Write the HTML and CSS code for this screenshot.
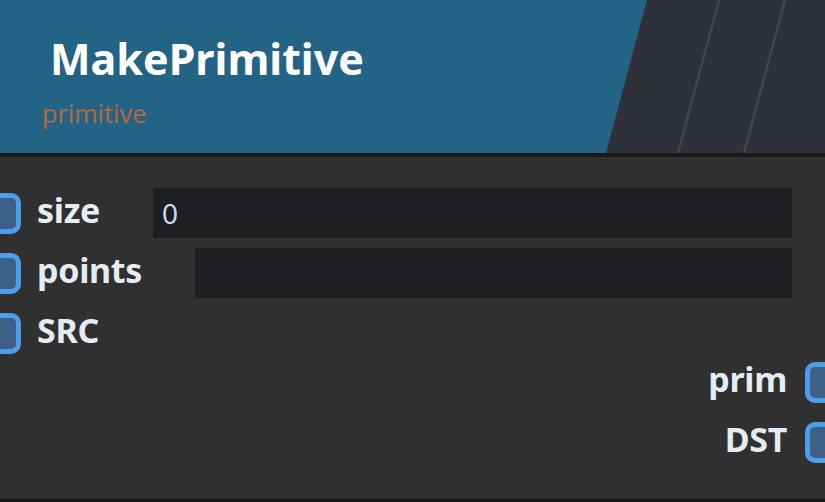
FILE: index.html
```html
<!DOCTYPE html>
<html lang="en">
<head>
  <meta charset="UTF-8" />
  <title>MakePrimitive</title>
  <link rel="stylesheet" href="styles.css">
</head>
<body>

<div class="node">
  <div class="node-head">
    <div class="title">MakePrimitive</div>
    <div class="category">primitive</div>
    <!-- striped corner -->
    <svg class="head-deco" width="825" height="153" viewBox="0 0 825 153">
      <polygon points="647,0 825,0 825,153 606,153" fill="#2f313a"/>
      <line x1="719" y1="0" x2="678" y2="153" stroke="#44454a" stroke-width="2.5"/>
      <line x1="785" y1="0" x2="744" y2="153" stroke="#44454a" stroke-width="2.5"/>
    </svg>
  </div>

  <div class="node-body">
    <div class="inputs">
      <div class="row">
        <span class="socket in"></span>
        <span class="label">size</span>
        <div class="field">0</div>
      </div>
      <div class="row">
        <span class="socket in"></span>
        <span class="label">points</span>
        <div class="field"></div>
      </div>
      <div class="row">
        <span class="socket in"></span>
        <span class="label">SRC</span>
      </div>
    </div>

    <div class="outputs">
      <div class="row out">
        <span class="label">prim</span>
        <span class="socket"></span>
      </div>
      <div class="row out">
        <span class="label">DST</span>
        <span class="socket"></span>
      </div>
    </div>
  </div>
</div>

</body>
</html>
```

FILE: styles.css
```css
body { margin: 0; background: #303030; font-family: "Noto Sans", "Open Sans", sans-serif; overflow: hidden; }
.node { width: 825px; height: 502px; overflow: hidden; display: flex; flex-direction: column; }

.node-head { position: relative; height: 153px; background: #236385; border-bottom: 4px solid #1a1a1a; box-sizing: content-box; }
.head-deco { position: absolute; top: 0; left: 0; }
.title { color: #fff; font-weight: bold; font-size: 43px; line-height: 1; padding: 37px 0 0 50px; position: relative; z-index: 1; }
.category { color: #b06a3c; font-size: 25px; line-height: 1; padding: 21px 0 0 42px; position: relative; z-index: 1; }

.node-body { flex: 1; background: #303030; border-bottom: 3px solid #1a1a1a; padding-top: 31px; }
.inputs, .outputs { display: flex; flex-direction: column; gap: 10px; }
.outputs { margin-top: -1px; }

.row { height: 50px; display: flex; align-items: center; }
.row.out { justify-content: flex-end; }

.label { color: #e4ecf4; font-weight: bold; font-size: 34px; line-height: 1; padding-bottom: 6px; letter-spacing: -0.3px; }
.row .label { margin-left: 16px; margin-right: 53px; }
.row.out .label { margin: 0 18px 0 0; }

.socket { width: 41px; height: 41px; box-sizing: border-box; border: 5px solid #4a9eea; background: #3e5f86; border-radius: 10px; flex: none; }
.socket.in { margin-left: -20px; }
.row.out .socket { margin-right: -21px; }

.field { flex: 1; margin-right: 33px; height: 50px; background: #1c1e21; color: #c7dcf0; font-size: 28px; line-height: 50px; padding-left: 9px; box-sizing: border-box; }
```
